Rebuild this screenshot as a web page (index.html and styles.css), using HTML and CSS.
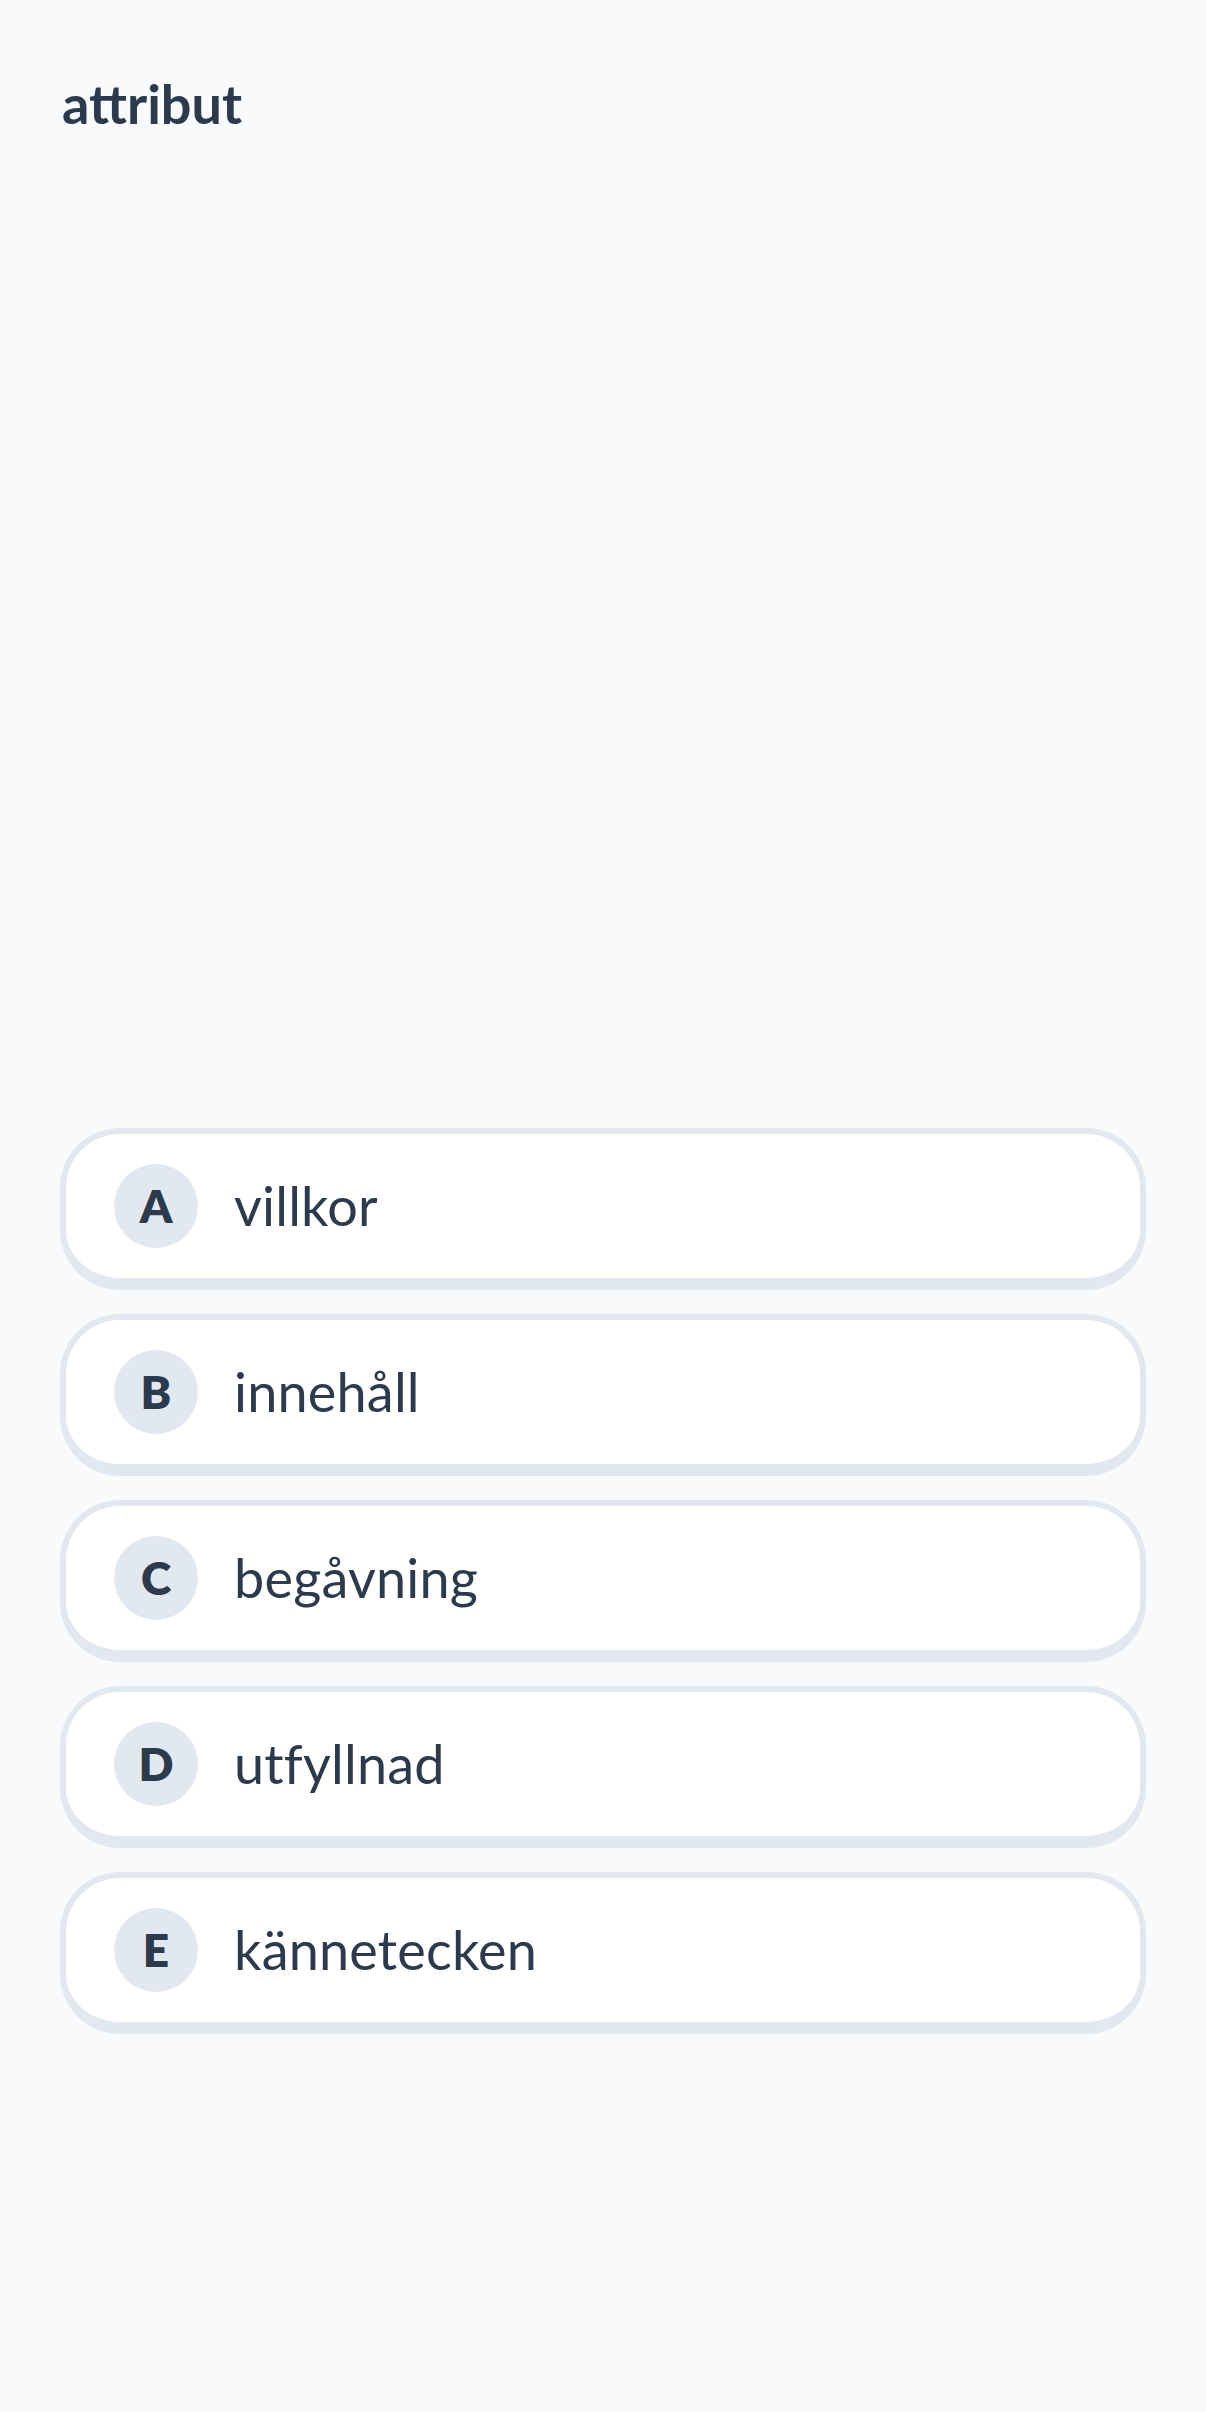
FILE: index.html
```html
<!DOCTYPE html>
<html lang="sv">
<head>
    <meta charset="UTF-8">
    <meta name="viewport" content="width=device-width, initial-scale=1.0">
    <title>attribut</title>
    <link rel="stylesheet" href="styles.css">
</head>
<body>
    <!-- Question word -->
    <div class="page">
        <h1 class="word">attribut</h1>

        <!-- Answer options -->
        <div class="options">
            <button class="option"><span class="letter">A</span><span class="label">villkor</span></button>
            <button class="option"><span class="letter">B</span><span class="label">innehåll</span></button>
            <button class="option"><span class="letter">C</span><span class="label">begåvning</span></button>
            <button class="option"><span class="letter">D</span><span class="label">utfyllnad</span></button>
            <button class="option"><span class="letter">E</span><span class="label">kännetecken</span></button>
        </div>
    </div>
</body>
</html>
```

FILE: styles.css
```css
/* Reset */
* {
    margin: 0;
    padding: 0;
    box-sizing: border-box;
}

body {
    background: #f8fafc;
    font-family: 'Lato', 'Noto Sans', sans-serif;
    color: #2c3a4e;
    min-height: 100vh;
}

.page {
    padding: 72px 60px 0 62px;
    display: flex;
    flex-direction: column;
}

/* Title */
.word {
    font-size: 54px;
    font-weight: 700;
    line-height: 1.2;
    letter-spacing: 0;
}

/* Options list */
.options {
    margin-top: 991px;
    margin-left: -2px;
    display: flex;
    flex-direction: column;
    gap: 24px;
}

.option {
    display: flex;
    align-items: center;
    gap: 36px;
    width: 100%;
    background: #fff;
    border: 6px solid #e2e8f0;
    border-bottom-width: 12px;
    border-radius: 60px;
    padding: 30px 48px;
    font-family: inherit;
    color: inherit;
    text-align: left;
    cursor: pointer;
}

.letter {
    width: 84px;
    height: 84px;
    flex-shrink: 0;
    border-radius: 50%;
    background: #e2e8f0;
    display: flex;
    align-items: center;
    justify-content: center;
    font-size: 46px;
    font-weight: 800;
}

.label {
    font-size: 54px;
    font-weight: 400;
    line-height: 84px;
    letter-spacing: 0.2px;
}
```
